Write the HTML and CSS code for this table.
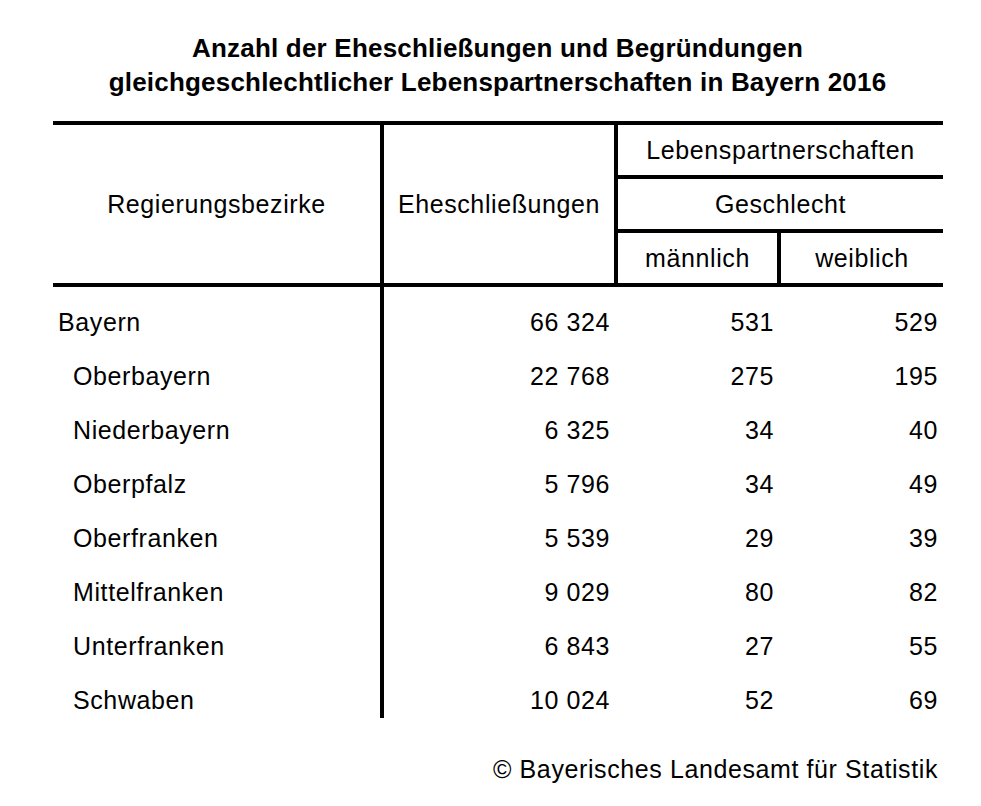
FILE: index.html
```html
<!DOCTYPE html>
<html lang="de">
<head>
<meta charset="utf-8">
<title>Eheschließungen Bayern 2016</title>
<link rel="stylesheet" href="styles.css">
</head>
<body>
<div class="page">
  <h1 class="title">Anzahl der Eheschließungen und Begründungen<br>gleichgeschlechtlicher Lebenspartnerschaften in Bayern 2016</h1>
  <table class="stats">
    <colgroup>
      <col class="c1"><col class="c2"><col class="c3"><col class="c4">
    </colgroup>
    <thead>
      <tr>
        <th rowspan="3" class="h-region">Regierungsbezirke</th>
        <th rowspan="3" class="h-ehe">Eheschließungen</th>
        <th colspan="2" class="h-top">Lebenspartnerschaften</th>
      </tr>
      <tr>
        <th colspan="2" class="h-mid">Geschlecht</th>
      </tr>
      <tr>
        <th class="h-m">männlich</th>
        <th class="h-w">weiblich</th>
      </tr>
    </thead>
    <tbody>
      <tr class="first"><td class="name">Bayern</td><td class="num n2">66 324</td><td class="num n3">531</td><td class="num n4">529</td></tr>
      <tr><td class="name sub">Oberbayern</td><td class="num n2">22 768</td><td class="num n3">275</td><td class="num n4">195</td></tr>
      <tr><td class="name sub">Niederbayern</td><td class="num n2">6 325</td><td class="num n3">34</td><td class="num n4">40</td></tr>
      <tr><td class="name sub">Oberpfalz</td><td class="num n2">5 796</td><td class="num n3">34</td><td class="num n4">49</td></tr>
      <tr><td class="name sub">Oberfranken</td><td class="num n2">5 539</td><td class="num n3">29</td><td class="num n4">39</td></tr>
      <tr><td class="name sub">Mittelfranken</td><td class="num n2">9 029</td><td class="num n3">80</td><td class="num n4">82</td></tr>
      <tr><td class="name sub">Unterfranken</td><td class="num n2">6 843</td><td class="num n3">27</td><td class="num n4">55</td></tr>
      <tr class="last"><td class="name sub">Schwaben</td><td class="num n2">10 024</td><td class="num n3">52</td><td class="num n4">69</td></tr>
    </tbody>
  </table>
  <p class="source">© Bayerisches Landesamt für Statistik</p>
</div>
</body>
</html>
```
FILE: styles.css
```css
html, body {
  margin: 0;
  padding: 0;
  background: #ffffff;
}
body {
  font-family: "Liberation Sans", Arial, sans-serif;
  color: #000;
}
.page {
  width: 981px;
  height: 806px;
  padding-top: 31px;
  box-sizing: border-box;
}
.title {
  margin: 0;
  padding-left: 14px;
  text-align: center;
  font-family: "Liberation Sans", Arial, sans-serif;
  font-weight: bold;
  font-size: 26px;
  letter-spacing: 0.2px;
  line-height: 34px;
}
.stats {
  margin: 22px 0 0 53px;
  width: 890px;
  table-layout: fixed;
  border-collapse: separate;
  border-spacing: 0;
  font-size: 25px;
  letter-spacing: 0.6px;
}
.c1 { width: 331px; }
.c2 { width: 234px; }
.c3 { width: 163px; }
.c4 { width: 162px; }

.stats th {
  font-weight: normal;
  padding: 0;
  text-align: center;
  vertical-align: middle;
  height: 50px;
  line-height: 50px;
}
.h-region, .h-ehe {
  border-top: 4px solid #000;
  border-right: 4px solid #000;
  border-bottom: 4px solid #000;
}
.h-top {
  border-top: 4px solid #000;
  border-bottom: 4px solid #000;
}
.h-mid {
  border-bottom: 4px solid #000;
}
.h-m {
  border-right: 4px solid #000;
  border-bottom: 4px solid #000;
}
.h-w {
  border-bottom: 4px solid #000;
}
.stats td {
  padding: 9px 0;
  line-height: 36px;
  vertical-align: top;
}
.stats .first td { padding-top: 17px; }
.stats .last td { padding-bottom: 0; }
.name {
  border-right: 4px solid #000;
  padding-left: 5px !important;
  text-align: left;
}
.name.sub { padding-left: 20px !important; }
.num { text-align: right; }
.n2 { padding-right: 8px !important; }
.n3 { padding-right: 7px !important; }
.n4 { padding-right: 5px !important; }
.source {
  margin: 36px 43px 0 0;
  text-align: right;
  font-size: 25px;
  letter-spacing: 0.6px;
  line-height: 30px;
}
```
